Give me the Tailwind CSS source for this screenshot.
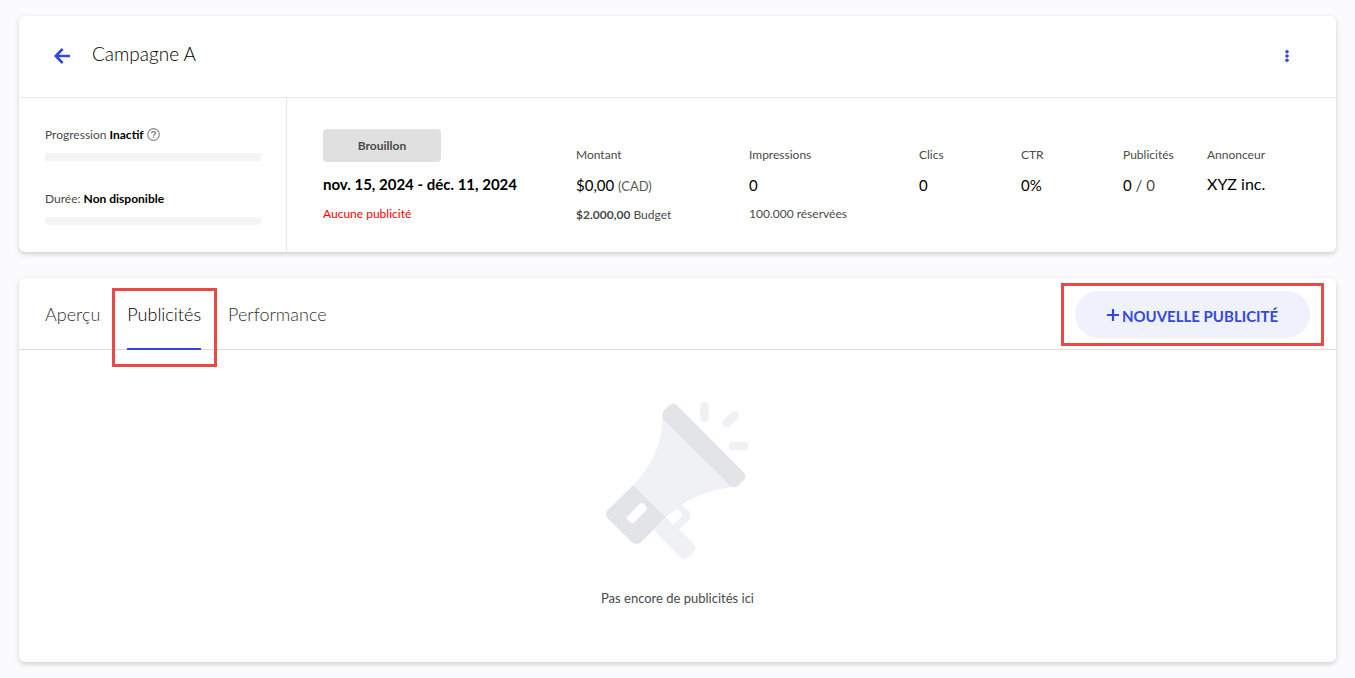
<!DOCTYPE html>
<html lang="fr">
<head>
  <meta charset="UTF-8" />
  <meta name="viewport" content="width=device-width, initial-scale=1.0"/>
  <title>Campagne A</title>
  <script src="https://cdn.jsdelivr.net/npm/@tailwindcss/browser@4"></script>
</head>
<body class="min-h-screen bg-[#fbfbfd] px-[19px] py-4 font-['Lato',sans-serif] text-[13px] leading-5 text-[#4a4a4a]">

<!-- Campaign summary -->
<section class="bg-white rounded-md shadow-[0_2px_5px_rgba(0,0,0,0.18)]">
  <header class="h-[82px] pl-[35px] pr-10 pb-[2px] flex items-center justify-between border-b border-[#e6e6e6]">
    <div class="flex items-center gap-[22px]">
      <button type="button" aria-label="Retour" class="text-[#3349dd]">
        <svg class="w-4 h-4" viewBox="0 0 16 16" fill="none" stroke="currentColor" stroke-width="2.6" stroke-linejoin="miter">
          <path d="M16 8H2M8.6 1L1.8 8l6.8 7" />
        </svg>
      </button>
      <h1 class="pb-1 text-[19px] font-light text-black">Campagne A</h1>
    </div>
    <button type="button" aria-label="Plus d'options" class="w-[18px] flex justify-center text-[#3349dd]">
      <svg class="w-1 h-3" viewBox="0 0 4 12" fill="currentColor">
        <circle cx="2" cy="1.8" r="1.8" /><circle cx="2" cy="6" r="1.8" /><circle cx="2" cy="10.2" r="1.8" />
      </svg>
    </button>
  </header>

  <div class="flex">
    <div class="w-[268px] shrink-0 border-r border-[#e6e6e6] pl-[26px] pr-[25px] py-[27px] text-xs leading-5">
      <p class="flex items-center gap-[3px]">
        <span>Progression <b class="font-bold text-black">Inactif</b></span>
        <svg class="w-[13px] h-[13px] mb-[2px]" viewBox="0 0 13 13" fill="none" stroke="#8a8a8a" stroke-width="1.2">
          <circle cx="6.5" cy="6.5" r="5.8" />
          <path stroke-width="1.5" d="M4.7 5.2c0-2.3 3.7-2.2 3.7 0 0 1.3-1.8 1.3-1.8 2.5M6.6 8.5v1.4" />
        </svg>
      </p>
      <div class="mt-2 h-2 bg-[#f4f4f4]"></div>
      <p class="mt-7">Durée: <b class="font-bold text-black">Non disponible</b></p>
      <div class="mt-2 h-2 rounded-sm bg-[#f4f4f4]"></div>
    </div>

    <div class="grow pl-9 pt-[31px] grid grid-cols-[253fr_173fr_170fr_102fr_102fr_84fr_129fr] text-xs leading-5 whitespace-nowrap">
      <div>
        <span class="flex w-[118px] h-[33px] items-center justify-center rounded bg-[#e0e0e0] font-bold">Brouillon</span>
        <p class="mt-[10px] text-[15px] leading-6 font-bold text-black">nov. 15, 2024 - déc. 11, 2024</p>
        <p class="mt-2 text-[#ff0000]">Aucune publicité</p>
      </div>
      <div class="pt-4">
        <p>Montant</p>
        <p class="mt-2 text-[15px] leading-6 text-black">$0,00 <span class="text-[13px] text-[#5a5a5a]">(CAD)</span></p>
        <p class="mt-[7px]"><b class="font-bold">$2.000,00</b> Budget</p>
      </div>
      <div class="pt-4">
        <p>Impressions</p>
        <p class="mt-2 text-[15px] leading-6 text-black">0</p>
        <p class="mt-[7px]">100.000 réservées</p>
      </div>
      <div class="pt-4">
        <p>Clics</p>
        <p class="mt-2 text-[15px] leading-6 text-black">0</p>
      </div>
      <div class="pt-4">
        <p>CTR</p>
        <p class="mt-2 text-[15px] leading-6 text-black">0%</p>
      </div>
      <div class="pt-4">
        <p>Publicités</p>
        <p class="mt-2 text-[15px] leading-6 text-black">0 <span class="text-[#4a4a4a]">/ 0</span></p>
      </div>
      <div class="pt-4">
        <p>Annonceur</p>
        <p class="mt-[7px] text-base leading-6 text-black">XYZ inc.</p>
      </div>
    </div>
  </div>
</section>

<!-- Tabs and ad list -->
<section class="mt-[26px] bg-white rounded-md shadow-[0_2px_5px_rgba(0,0,0,0.18)]">
  <div class="h-[72px] px-[26px] flex items-center justify-between border-b border-[#dcdcdc]">
    <nav class="h-[72px] flex gap-[27px] text-lg font-light text-[#303030]">
      <a href="#" class="flex items-center">Aperçu</a>
      <a href="#" class="relative flex items-center border-b-2 border-[#3349dd] pt-[2px] text-black">
        Publicités
        <span class="absolute -left-[15px] -right-4 top-[10px] h-[79px] border-3 border-[#e84a45]"></span>
      </a>
      <a href="#" class="flex items-center">Performance</a>
    </nav>
    <div class="relative mt-[2px]">
      <button type="button" class="w-[235px] h-[47px] pt-[2px] rounded-full bg-[#eff1fd] flex items-center justify-center gap-[3px] text-[15px] font-bold text-[#3349dd]">
        <svg class="w-3 h-3 mb-[2px]" viewBox="0 0 12 12" fill="none" stroke="currentColor" stroke-width="2.2">
          <path d="M6 0v12M0 6h12" />
        </svg>
        NOUVELLE PUBLICITÉ
      </button>
      <span class="absolute -inset-x-[14px] -inset-y-2 border-3 border-[#e84a45] pointer-events-none"></span>
    </div>
  </div>

  <div class="pt-[52px] pb-[54px] flex flex-col items-center">
    <svg class="w-[144px] h-[157px]" viewBox="45 36 432 471" fill="#f0f1f5">
      <!-- handle -->
      <path d="M188 420L224 382 262 356 271 344 294 362Q304 376 294 390L264 418 308 461Q319 475 308 487L294 501Q281 512 268 501Z" />
      <path fill="#fff" d="M225 382L256 356 270 367Q277 375 270 382L247 405Z" />
      <!-- cone -->
      <path d="M214 80L430 290C370 298 315 315 273 344L224 382 127 285C190 220 215 145 214 80Z" />
      <path fill="#e3e4e8" d="M219 61L235 46Q247 37 258 46L459 248Q468 260 459 270L441 287Q430 296 418 287L217 88Q210 74 219 61Z" />
      <!-- back -->
      <path fill="#e3e4e8" d="M127 285L224 382 150 457Q137 467 123 457L50 385Q41 372 50 360Z" />
      <path fill="#fff" d="M109 380L147 341Q153 337 158 341L166 350Q170 355 166 360L129 398Q124 402 119 398L109 388Q106 384 109 380Z" />
      <rect x="327" y="36" width="26" height="60" rx="13" />
      <rect x="413" y="155" width="59" height="26" rx="13" />
      <rect x="389" y="75" width="60" height="26" rx="13" transform="rotate(-43 419 88)" />
    </svg>
    <p class="mt-[29px] text-[13px]">Pas encore de publicités ici</p>
  </div>
</section>

</body>
</html>
